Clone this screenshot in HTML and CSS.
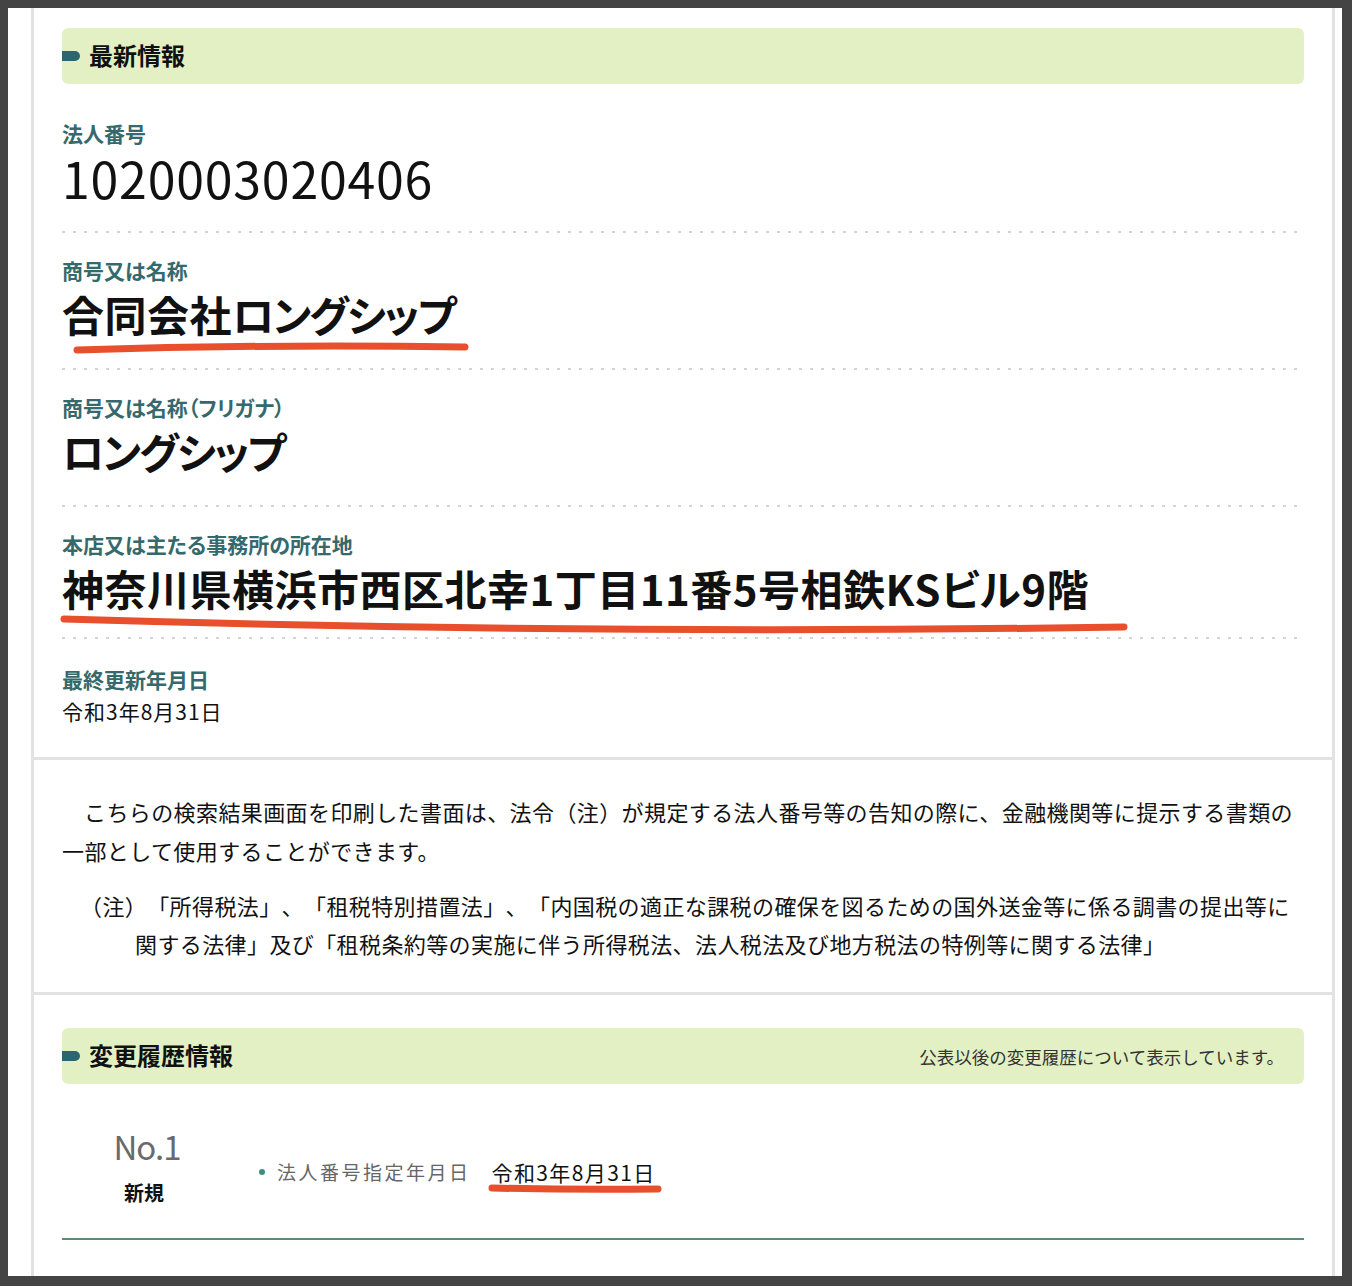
FILE: index.html
```html
<!DOCTYPE html>
<html lang="ja">

<head>
    <meta charset="UTF-8" />
    <meta name="viewport" content="width=device-width, initial-scale=1.0" />
    <title>法人番号 検索結果</title>
    <link rel="stylesheet" href="styles.css">
</head>

<body>

    <div class="page">

        <!-- 最新情報 -->
        <section class="panel panel-info">
            <h2 class="bar"><span class="bar-title">最新情報</span></h2>

            <dl class="fields">
                <div class="field">
                    <dt class="field-label">法人番号</dt>
                    <dd class="field-value number">1020003020406</dd>
                </div>
                <div class="field">
                    <dt class="field-label">商号又は名称</dt>
                    <dd class="field-value">合同会社<span class="kana">ロングシップ</span></dd>
                </div>
                <div class="field">
                    <dt class="field-label">商号又は名称（フリガナ）</dt>
                    <dd class="field-value"><span class="kana">ロングシップ</span></dd>
                </div>
                <div class="field field-addr">
                    <dt class="field-label">本店又は主たる事務所の所在地</dt>
                    <dd class="field-value">神奈川県横浜市西区北幸1丁目11番5号相鉄KSビル9階</dd>
                </div>
                <div class="field field-last">
                    <dt class="field-label">最終更新年月日</dt>
                    <dd class="field-value date">令和3年8月31日</dd>
                </div>
            </dl>
        </section>

        <!-- 注意書き -->
        <section class="panel panel-notice">
            <p class="notice">こちらの検索結果画面を印刷した書面は、法令（注）が規定する法人番号等の告知の際に、金融機関等に提示する書類の一部として使用することができます。</p>
            <p class="note">（注）「所得税法」、「租税特別措置法」、「内国税の適正な課税の確保を図るための国外送金等に係る調書の提出等に関する法律」及び「租税条約等の実施に伴う所得税法、法人税法及び地方税法の特例等に関する法律」</p>
        </section>

        <!-- 変更履歴情報 -->
        <section class="panel panel-history">
            <div class="bar">
                <h2 class="bar-title">変更履歴情報</h2>
                <p class="bar-note">公表以後の変更履歴について表示しています。</p>
            </div>

            <div class="history-item">
                <div class="history-no">
                    <span class="no">No.1</span>
                    <span class="kind">新規</span>
                </div>
                <ul class="history-detail">
                    <li>
                        <span class="detail-label">法人番号指定年月日</span>
                        <span class="detail-value">令和3年8月31日</span>
                    </li>
                </ul>
            </div>
        </section>

    </div>

    <!-- 赤い手書きの下線 -->
    <svg class="marks" width="1352" height="1286" viewBox="0 0 1352 1286">
        <g fill="none" stroke="#e8502d" stroke-width="7" stroke-linecap="round">
            <path d="M77 350 Q 270 344 465 347" />
            <path d="M64 619 Q 600 635 1124 627" />
            <path d="M492 1188 Q 575 1190 658 1189" />
        </g>
    </svg>

</body>

</html>
```

FILE: styles.css
```css
/* ページ全体 */
body {
    margin: 0;
    padding: 8px 10px 10px 8px;
    background: #444;
    font-family: "Noto Sans CJK JP", "Noto Sans", sans-serif;
    color: #111;
    text-spacing-trim: space-all;
}

.page {
    height: 1268px;
    overflow: hidden;
    background: #fff;
    padding: 0 7px 0 23px;
}

/* 枠で囲まれた各ブロック */
.panel {
    border: 3px solid #e2e2e2;
    border-top: 0;
    padding: 0 28px;
}

/* 緑の見出しバー */
.bar {
    display: flex;
    align-items: center;
    height: 56px;
    box-sizing: border-box;
    margin: 0;
    padding: 0 20px 3px 0;
    background: #e3f0c4;
    border-radius: 6px;
}

.bar::before {
    content: "";
    width: 18px;
    height: 10px;
    margin: 3px 9px 0 0;
    background: #2b6670;
    border-radius: 0 5px 5px 0;
    flex-shrink: 0;
}

.bar-title {
    margin: 0;
    font-size: 24px;
    font-weight: bold;
    color: #111;
}

.bar-note {
    margin: 3px 0 0 auto;
    font-size: 17.5px;
    color: #333;
}

/* 最新情報 */
.panel-info {
    padding-top: 20px;
    padding-bottom: 31px;
}

.fields {
    margin: 12px 0 0;
}

.field {
    padding: 22px 0 29px;
    background: repeating-linear-gradient(90deg, #d4d4d4 0 3px, transparent 3px 11px) left bottom / 100% 2px no-repeat;
}

.field-addr {
    padding-bottom: 24px;
}

.field-last {
    padding: 25px 0 0;
    background: none;
}

.field-label {
    margin-bottom: 2px;
    font-size: 21px;
    line-height: 30px;
    font-weight: bold;
    color: #35696c;
    font-feature-settings: "palt";
}

.field-value {
    margin: 0;
    font-size: 42px;
    line-height: 54px;
    font-weight: bold;
    letter-spacing: 0.5px;
    font-feature-settings: "palt";
}

.field-value .kana {
    letter-spacing: -2px;
}

.number {
    font-size: 50px;
    font-weight: normal;
    letter-spacing: 0.8px;
}

.date {
    font-size: 21px;
    line-height: 30px;
    font-weight: normal;
    letter-spacing: 1px;
    font-feature-settings: normal;
}

/* 注意書き */
.panel-notice {
    padding-top: 32px;
    padding-bottom: 30px;
}

.notice,
.note {
    margin: 0;
    font-size: 22px;
    letter-spacing: 0.4px;
}

.notice {
    line-height: 39px;
    text-indent: 1em;
}

.note {
    margin-top: 16px;
    line-height: 38px;
    padding-left: 73px;
    text-indent: -55px;
}

/* 変更履歴情報 */
.panel-history {
    padding-top: 33px;
    padding-bottom: 120px;
}

.history-item {
    display: flex;
    align-items: center;
    padding: 42px 0 31px;
    border-bottom: 2px solid #5e8b70;
}

.history-no {
    width: 170px;
    display: flex;
    flex-direction: column;
    align-items: center;
}

.no {
    font-size: 33px;
    line-height: 40px;
    color: #6a6a6a;
    letter-spacing: -1px;
}

.kind {
    margin: 13px 6px 0 0;
    font-size: 20px;
    line-height: 28px;
    font-weight: bold;
}

.history-detail {
    list-style: none;
    margin: 10px 0 0 27px;
    padding: 0;
}

.history-detail li {
    display: flex;
    align-items: center;
    line-height: 30px;
}

.history-detail li::before {
    content: "";
    width: 6px;
    height: 6px;
    margin-right: 12px;
    border-radius: 50%;
    background: #3d8c7f;
}

.detail-label {
    margin-right: 21px;
    font-size: 19px;
    letter-spacing: 2.5px;
    color: #666;
}

.detail-value {
    font-size: 21px;
    letter-spacing: 1.4px;
}

/* 下線の注釈（内容の上に重ねる） */
.marks {
    position: absolute;
    top: 0;
    left: 0;
    pointer-events: none;
}
```
